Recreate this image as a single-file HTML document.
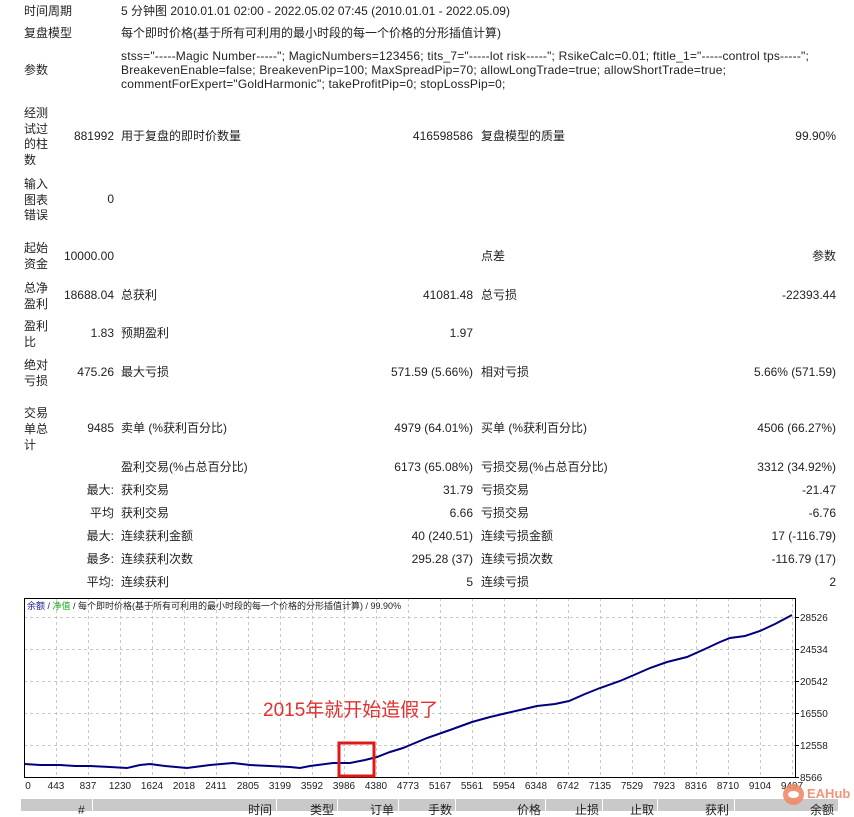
<!DOCTYPE html>
<html><head><meta charset="utf-8"><style>
body{margin:0;width:854px;height:809px;background:#fff;position:relative;overflow:hidden;font-family:"Liberation Sans","Noto Sans CJK SC",sans-serif;font-size:12px;color:#222;}
.t{position:absolute;white-space:nowrap;line-height:14px;}
.p{letter-spacing:0.2px}
.a{right:740px;text-align:right}
.m{right:381px;text-align:right}
.z{right:18px;text-align:right}
.hd{position:absolute;top:799px;height:12px;background:#c9c9c9;border-right:1px solid #fff;}
</style></head><body>
<div class="t" style="left:24px;top:4px">时间周期</div>
<div class="t" style="left:121px;top:4px">5 分钟图 2010.01.01 02:00 - 2022.05.02 07:45 (2010.01.01 - 2022.05.09)</div>
<div class="t" style="left:24px;top:26px">复盘模型</div>
<div class="t" style="left:121px;top:26px">每个即时价格(基于所有可利用的最小时段的每一个价格的分形插值计算)</div>
<div class="t" style="left:24px;top:63px">参数</div>
<div class="t p" style="left:121px;top:49px">stss="-----Magic Number-----"; MagicNumbers=123456; tits_7="-----lot risk-----"; RsikeCalc=0.01; ftitle_1="-----control tps-----";</div>
<div class="t p" style="left:121px;top:63px">BreakevenEnable=false; BreakevenPip=100; MaxSpreadPip=70; allowLongTrade=true; allowShortTrade=true;</div>
<div class="t p" style="left:121px;top:77px">commentForExpert="GoldHarmonic"; takeProfitPip=0; stopLossPip=0;</div>

<div class="t" style="left:24px;top:106px;line-height:15.7px">经测<br>试过<br>的柱<br>数</div>
<div class="t a" style="top:129px">881992</div>
<div class="t" style="left:121px;top:129px">用于复盘的即时价数量</div>
<div class="t m" style="top:129px">416598586</div>
<div class="t" style="left:481px;top:129px">复盘模型的质量</div>
<div class="t z" style="top:129px">99.90%</div>

<div class="t" style="left:24px;top:177px;line-height:15.5px">输入<br>图表<br>错误</div>
<div class="t a" style="top:192px">0</div>

<div class="t" style="left:24px;top:240px;line-height:16px">起始<br>资金</div>
<div class="t a" style="top:249px">10000.00</div>
<div class="t" style="left:481px;top:249px">点差</div>
<div class="t z" style="top:249px">参数</div>

<div class="t" style="left:24px;top:280px;line-height:16px">总净<br>盈利</div>
<div class="t a" style="top:288px">18688.04</div>
<div class="t" style="left:121px;top:288px">总获利</div>
<div class="t m" style="top:288px">41081.48</div>
<div class="t" style="left:481px;top:288px">总亏损</div>
<div class="t z" style="top:288px">-22393.44</div>

<div class="t" style="left:24px;top:318px;line-height:16px">盈利<br>比</div>
<div class="t a" style="top:326px">1.83</div>
<div class="t" style="left:121px;top:326px">预期盈利</div>
<div class="t m" style="top:326px">1.97</div>

<div class="t" style="left:24px;top:357px;line-height:16px">绝对<br>亏损</div>
<div class="t a" style="top:365px">475.26</div>
<div class="t" style="left:121px;top:365px">最大亏损</div>
<div class="t m" style="top:365px">571.59 (5.66%)</div>
<div class="t" style="left:481px;top:365px">相对亏损</div>
<div class="t z" style="top:365px">5.66% (571.59)</div>

<div class="t" style="left:24px;top:405px;line-height:16px">交易<br>单总<br>计</div>
<div class="t a" style="top:421px">9485</div>
<div class="t" style="left:121px;top:421px">卖单 (%获利百分比)</div>
<div class="t m" style="top:421px">4979 (64.01%)</div>
<div class="t" style="left:481px;top:421px">买单 (%获利百分比)</div>
<div class="t z" style="top:421px">4506 (66.27%)</div>

<div class="t" style="left:121px;top:460px">盈利交易(%占总百分比)</div>
<div class="t m" style="top:460px">6173 (65.08%)</div>
<div class="t" style="left:481px;top:460px">亏损交易(%占总百分比)</div>
<div class="t z" style="top:460px">3312 (34.92%)</div>

<div class="t a" style="top:483px">最大:</div><div class="t" style="left:121px;top:483px">获利交易</div><div class="t m" style="top:483px">31.79</div><div class="t" style="left:481px;top:483px">亏损交易</div><div class="t z" style="top:483px">-21.47</div>
<div class="t a" style="top:506px">平均</div><div class="t" style="left:121px;top:506px">获利交易</div><div class="t m" style="top:506px">6.66</div><div class="t" style="left:481px;top:506px">亏损交易</div><div class="t z" style="top:506px">-6.76</div>
<div class="t a" style="top:529px">最大:</div><div class="t" style="left:121px;top:529px">连续获利金额</div><div class="t m" style="top:529px">40 (240.51)</div><div class="t" style="left:481px;top:529px">连续亏损金额</div><div class="t z" style="top:529px">17 (-116.79)</div>
<div class="t a" style="top:552px">最多:</div><div class="t" style="left:121px;top:552px">连续获利次数</div><div class="t m" style="top:552px">295.28 (37)</div><div class="t" style="left:481px;top:552px">连续亏损次数</div><div class="t z" style="top:552px">-116.79 (17)</div>
<div class="t a" style="top:575px">平均:</div><div class="t" style="left:121px;top:575px">连续获利</div><div class="t m" style="top:575px">5</div><div class="t" style="left:481px;top:575px">连续亏损</div><div class="t z" style="top:575px">2</div>

<svg style="position:absolute;left:0;top:590px" width="854" height="209" font-family="Liberation Sans, Noto Sans CJK SC, sans-serif" font-size="10">
<g stroke="#c8c8c8" stroke-dasharray="3,3" stroke-width="1">
<line x1="24" y1="27.5" x2="795" y2="27.5"/><line x1="24" y1="59.5" x2="795" y2="59.5"/><line x1="24" y1="91.5" x2="795" y2="91.5"/><line x1="24" y1="123.5" x2="795" y2="123.5"/><line x1="24" y1="155.5" x2="795" y2="155.5"/>
<line x1="56.5" y1="8" x2="56.5" y2="187"/><line x1="88.5" y1="8" x2="88.5" y2="187"/><line x1="120.5" y1="8" x2="120.5" y2="187"/><line x1="152.5" y1="8" x2="152.5" y2="187"/><line x1="184.5" y1="8" x2="184.5" y2="187"/><line x1="216.5" y1="8" x2="216.5" y2="187"/><line x1="248.5" y1="8" x2="248.5" y2="187"/><line x1="280.5" y1="8" x2="280.5" y2="187"/><line x1="312.5" y1="8" x2="312.5" y2="187"/><line x1="344.5" y1="8" x2="344.5" y2="187"/><line x1="376.5" y1="8" x2="376.5" y2="187"/><line x1="408.5" y1="8" x2="408.5" y2="187"/><line x1="440.5" y1="8" x2="440.5" y2="187"/><line x1="472.5" y1="8" x2="472.5" y2="187"/><line x1="504.5" y1="8" x2="504.5" y2="187"/><line x1="536.5" y1="8" x2="536.5" y2="187"/><line x1="568.5" y1="8" x2="568.5" y2="187"/><line x1="600.5" y1="8" x2="600.5" y2="187"/><line x1="632.5" y1="8" x2="632.5" y2="187"/><line x1="664.5" y1="8" x2="664.5" y2="187"/><line x1="696.5" y1="8" x2="696.5" y2="187"/><line x1="728.5" y1="8" x2="728.5" y2="187"/><line x1="760.5" y1="8" x2="760.5" y2="187"/><line x1="792.5" y1="8" x2="792.5" y2="187"/>
</g>
<rect x="24.5" y="8.5" width="771" height="179" fill="none" stroke="#000"/>
<g stroke="#000"><line x1="795" y1="27.5" x2="799" y2="27.5"/><line x1="795" y1="59.5" x2="799" y2="59.5"/><line x1="795" y1="91.5" x2="799" y2="91.5"/><line x1="795" y1="123.5" x2="799" y2="123.5"/><line x1="795" y1="155.5" x2="799" y2="155.5"/><line x1="795" y1="187.5" x2="799" y2="187.5"/></g>
<text x="27" y="19" font-size="9"><tspan fill="#1a1a8c">余额</tspan><tspan fill="#222"> / </tspan><tspan fill="#1fa81f">净值</tspan><tspan fill="#222"> / 每个即时价格(基于所有可利用的最小时段的每一个价格的分形插值计算) / 99.90%</tspan></text>
<polyline fill="none" stroke="#00007f" stroke-width="2" points="25,174 40,175 60,175 75,176 90,176 110,177 127,178 140,175 150,174 165,176 187,178 210,175 233,173 250,175 270,176 290,177 300,178 310,176 333,173 350,173 365,170 377,167 390,162 403,158 415,153 427,148 450,140 472,132 490,127 507,123 520,120 537,116 555,114 569,111 585,104 600,98 620,91 634,85 650,78 667,72 687,67 705,59 720,52 730,48 745,46 760,41 775,34 792,25"/>
<rect x="339" y="153" width="35" height="33" fill="none" stroke="#e01818" stroke-width="3"/>
<text x="263" y="126" font-size="19" fill="#e03030">2015年就开始造假了</text>
<g fill="#222" font-size="10">
<text x="800" y="31">28526</text><text x="800" y="63">24534</text><text x="800" y="95">20542</text><text x="800" y="127">16550</text><text x="800" y="159">12558</text><text x="800" y="191">8566</text>
</g>
<g fill="#222" font-size="10" text-anchor="middle">
<text x="28" y="199">0</text><text x="56" y="199">443</text><text x="88" y="199">837</text><text x="120" y="199">1230</text><text x="152" y="199">1624</text><text x="184" y="199">2018</text><text x="216" y="199">2411</text><text x="248" y="199">2805</text><text x="280" y="199">3199</text><text x="312" y="199">3592</text><text x="344" y="199">3986</text><text x="376" y="199">4380</text><text x="408" y="199">4773</text><text x="440" y="199">5167</text><text x="472" y="199">5561</text><text x="504" y="199">5954</text><text x="536" y="199">6348</text><text x="568" y="199">6742</text><text x="600" y="199">7135</text><text x="632" y="199">7529</text><text x="664" y="199">7923</text><text x="696" y="199">8316</text><text x="728" y="199">8710</text><text x="760" y="199">9104</text><text x="792" y="199">9497</text>
</g>
</svg>

<div class="hd" style="left:21px;width:71px"></div>
<div class="hd" style="left:93px;width:183px"></div>
<div class="hd" style="left:277px;width:60px"></div>
<div class="hd" style="left:338px;width:60px"></div>
<div class="hd" style="left:399px;width:56px"></div>
<div class="hd" style="left:456px;width:89px"></div>
<div class="hd" style="left:546px;width:56px"></div>
<div class="hd" style="left:603px;width:54px"></div>
<div class="hd" style="left:658px;width:76px"></div>
<div class="hd" style="left:735px;width:103px"></div>
<div class="t" style="left:78px;top:803px">#</div>
<div class="t" style="left:248px;top:803px">时间</div>
<div class="t" style="left:310px;top:803px">类型</div>
<div class="t" style="left:370px;top:803px">订单</div>
<div class="t" style="left:428px;top:803px">手数</div>
<div class="t" style="left:517px;top:803px">价格</div>
<div class="t" style="left:575px;top:803px">止损</div>
<div class="t" style="left:630px;top:803px">止取</div>
<div class="t" style="left:705px;top:803px">获利</div>
<div class="t" style="left:810px;top:803px">余额</div>

<div style="position:absolute;left:783px;top:784px;width:21px;height:21px;border-radius:50%;background:#f08a6a;opacity:.9"></div>
<div style="position:absolute;left:788px;top:791px;width:11px;height:7px;border-radius:50%;background:#fff"></div>
<div class="t" style="left:807px;top:787px;font-size:13px;font-weight:bold;color:#f08a6a;opacity:.9">EAHub</div>
</body></html>
